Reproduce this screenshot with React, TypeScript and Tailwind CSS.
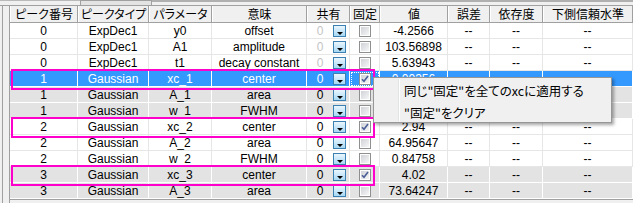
import React from 'react';

type Row = {
  peak: string;
  type: string;
  param: string;
  meaning: string;
  share: string;
  fixed: boolean;
  value: string;
  tone: 'white' | 'gray' | 'selected';
  dimShare?: boolean;
  dash?: boolean;
};

const headers = ['ピーク番号', 'ピークタイプ', 'パラメータ', '意味', '共有', '固定', '値', '誤差', '依存度', '下側信頼水準'];

// rows under the context menu keep their right-hand cells empty (they are covered anyway)
const rows: Row[] = [
  { peak: '0', type: 'ExpDec1', param: 'y0', meaning: 'offset', share: '0', fixed: false, value: '-4.2566', tone: 'white', dimShare: true, dash: true },
  { peak: '0', type: 'ExpDec1', param: 'A1', meaning: 'amplitude', share: '0', fixed: false, value: '103.56898', tone: 'white', dimShare: true, dash: true },
  { peak: '0', type: 'ExpDec1', param: 't1', meaning: 'decay constant', share: '0', fixed: false, value: '5.63943', tone: 'white', dimShare: true, dash: true },
  { peak: '1', type: 'Gaussian', param: 'xc_1', meaning: 'center', share: '0', fixed: true, value: '0.00356', tone: 'selected' },
  { peak: '1', type: 'Gaussian', param: 'A_1', meaning: 'area', share: '0', fixed: false, value: '', tone: 'gray' },
  { peak: '1', type: 'Gaussian', param: 'w_1', meaning: 'FWHM', share: '0', fixed: false, value: '', tone: 'gray' },
  { peak: '2', type: 'Gaussian', param: 'xc_2', meaning: 'center', share: '0', fixed: true, value: '2.94', tone: 'white', dash: true },
  { peak: '2', type: 'Gaussian', param: 'A_2', meaning: 'area', share: '0', fixed: false, value: '64.95647', tone: 'white', dash: true },
  { peak: '2', type: 'Gaussian', param: 'w_2', meaning: 'FWHM', share: '0', fixed: false, value: '0.84758', tone: 'white', dash: true },
  { peak: '3', type: 'Gaussian', param: 'xc_3', meaning: 'center', share: '0', fixed: true, value: '4.02', tone: 'gray', dash: true },
  { peak: '3', type: 'Gaussian', param: 'A_3', meaning: 'area', share: '0', fixed: false, value: '73.64247', tone: 'gray', dash: true },
];

const COLS = 'grid grid-cols-[68px_71px_63px_95px_43px_30px_68px_42px_53px_90px]';

const DropButton = () => (
  <div className="relative w-[13px] h-[12px] border border-[#3c7fb1] bg-gradient-to-b from-[#eaf6fd] to-[#a7d8f5]">
    <div className="absolute left-[3px] bottom-[1px] w-0 h-0 border-l-[3px] border-r-[3px] border-t-[3px] border-l-transparent border-r-transparent border-t-black" />
  </div>
);

const CheckBox = ({ checked }: { checked: boolean }) => (
  <div className="w-[12px] h-[12px] border border-[#8e8f8f] bg-white p-px">
    <div className="w-full h-full bg-gradient-to-br from-[#cfd2d7] to-[#f6f6f6] flex items-center justify-center">
      {checked && (
        <svg width="8" height="8" viewBox="0 0 8 8">
          <path d="M1 4.2 L3 6.3 L7 1" fill="none" stroke="#4a5f97" strokeWidth="1.6" />
        </svg>
      )}
    </div>
  </div>
);

const toneClass = (tone: Row['tone']) => {
  switch (tone) {
    case 'selected':
      return 'bg-[#3399ff] text-white border-white';
    case 'gray':
      return 'bg-[#e3e3e3] text-black border-white';
    default:
      return 'bg-white text-black border-[#e6e6e6]';
  }
};

const TableRow = ({ row }: { row: Row }) => {
  const cell = `h-[16px] border-r border-b flex items-center justify-center leading-none whitespace-nowrap overflow-hidden ${toneClass(row.tone)}`;
  const dash = row.dash ? '--' : '';
  return (
    <div className={COLS}>
      <div className={cell}>{row.peak}</div>
      <div className={cell}>{row.type}</div>
      <div className={cell}>{row.param}</div>
      <div className={cell}>{row.meaning}</div>
      <div className={`${cell} !justify-start`}>
        <span className={`w-[26px] text-center ${row.dimShare ? 'text-[#c4c4c4]' : ''}`}>{row.share}</span>
        <DropButton />
      </div>
      <div className={`${cell} ${row.tone === 'selected' ? 'outline outline-1 outline-dotted outline-white -outline-offset-2' : ''}`}>
        <CheckBox checked={row.fixed} />
      </div>
      <div className={cell}>{row.value}</div>
      <div className={cell}>{dash}</div>
      <div className={cell}>{dash}</div>
      <div className={cell}>{dash}</div>
    </div>
  );
};

export default function App() {
  const boxes = [69, 117, 165];
  return (
    <div className="relative w-[633px] h-[203px] overflow-hidden bg-[#f0f0f0] text-[12px] font-['Liberation_Sans','Noto_Sans_CJK_JP',sans-serif]">
      {/* tab strip remnant */}
      <div className="h-[6px] flex border-b border-[#a0a0a0]">
        <div className="w-[80px] border-t border-[#b9b9b9] bg-[#f0f0f0]" />
        <div className="w-[72px] border-t border-l border-r border-[#a0a0a0] bg-[#e3e3e3]" />
        <div className="flex-1 border-t-2 border-[#b0b0b0] bg-[#f0f0f0]" />
      </div>
      <div className="flex">
        <div className="w-[10px] h-[197px] pl-[2px]">
          <div className="h-full border-l border-r border-[#a0a0a0] bg-[#f0f0f0]" />
        </div>
        <div className="flex-1">
          <div className={`${COLS} h-[17px] bg-[#f0f0f0] border-b border-[#a0a0a0]`}>
            {headers.map((h) => (
              <div
                key={h}
                className="flex items-center justify-center whitespace-nowrap overflow-hidden border-l border-white border-r border-r-[#a0a0a0] font-['Noto_Sans_CJK_JP',sans-serif] [font-feature-settings:'palt'] text-[12px] leading-none text-black"
              >
                {h}
              </div>
            ))}
          </div>
          {rows.map((r, i) => (
            <TableRow key={i} row={r} />
          ))}
          <div className="h-[4px] border-t border-[#a0a0a0] bg-[#f0f0f0]" />
        </div>
      </div>

      {/* annotation boxes */}
      {boxes.map((t) => (
        <div key={t} className="absolute left-[11px] w-[364px] h-[21px] border-2 border-[#ff00cc]" style={{ top: t }} />
      ))}

      {/* context menu */}
      <div className="absolute left-[373px] top-[77px] w-[239px] h-[46px] bg-[#f0f0f0] border border-[#979797] shadow-[2px_2px_3px_rgba(0,0,0,0.35)] font-['Noto_Sans_CJK_JP',sans-serif] [font-feature-settings:'palt'] text-[12.5px] text-black">
        <div className="absolute left-[24px] top-[1px] bottom-[1px] w-[2px] border-l border-[#e2e3e3] border-r border-r-white" />
        <div className="absolute left-[30px] top-[4px] h-[18px] flex items-center leading-none whitespace-nowrap">同じ"固定"を全てのxcに適用する</div>
        <div className="absolute left-[30px] top-[26px] h-[18px] flex items-center leading-none whitespace-nowrap">"固定"をクリア</div>
      </div>
    </div>
  );
}
